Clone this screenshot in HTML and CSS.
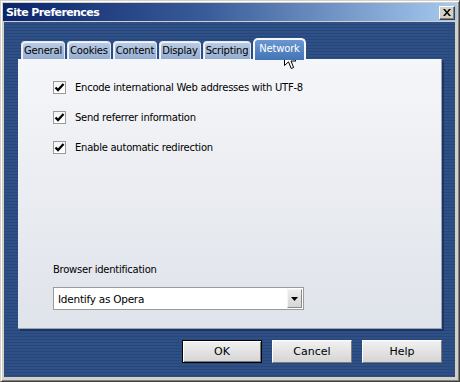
FILE: index.html
```html
<!DOCTYPE html>
<html lang="en">
<head>
    <meta charset="UTF-8">
    <title>Site Preferences</title>
    <link rel="stylesheet" href="styles.css">
</head>
<body>
    <div class="window">
        <!-- Title bar -->
        <div class="titlebar">
            <span class="title">Site Preferences</span>
            <button class="close-btn">
                <svg width="8" height="7" viewBox="0 0 8 7"><path d="M0 0h2l2 2.5L6 0h2L5 3.5 8 7H6L4 4.5 2 7H0l3-3.5z" fill="#000"/></svg>
            </button>
        </div>

        <div class="client">
            <!-- Tabs -->
            <div class="tabs">
                <div class="tab">General</div>
                <div class="tab">Cookies</div>
                <div class="tab">Content</div>
                <div class="tab">Display</div>
                <div class="tab">Scripting</div>
                <div class="tab active">Network</div>
            </div>

            <!-- Panel -->
            <div class="panel">
                <div class="options">
                    <label class="option"><span class="check"><svg width="11" height="11" viewBox="0 0 11 11"><path d="M1.5 5.5l2.5 2.6L9.5 2" fill="none" stroke="#000" stroke-width="2.2"/></svg></span>Encode international Web addresses with UTF-8</label>
                    <label class="option"><span class="check"><svg width="11" height="11" viewBox="0 0 11 11"><path d="M1.5 5.5l2.5 2.6L9.5 2" fill="none" stroke="#000" stroke-width="2.2"/></svg></span>Send referrer information</label>
                    <label class="option"><span class="check"><svg width="11" height="11" viewBox="0 0 11 11"><path d="M1.5 5.5l2.5 2.6L9.5 2" fill="none" stroke="#000" stroke-width="2.2"/></svg></span>Enable automatic redirection</label>
                </div>

                <div class="ident">
                    <div class="ident-label">Browser identification</div>
                    <div class="select">
                        <span class="select-value">Identify as Opera</span>
                        <span class="select-arrow">
                            <svg width="7" height="4" viewBox="0 0 7 4"><path d="M0 0h7L3.5 4z" fill="#000"/></svg>
                        </span>
                    </div>
                </div>
            </div>

            <!-- Buttons -->
            <div class="buttons">
                <button class="btn default">OK</button>
                <button class="btn">Cancel</button>
                <button class="btn">Help</button>
            </div>
        </div>
    </div>

    <!-- Mouse pointer -->
    <svg class="pointer" width="13" height="21" viewBox="0 0 13 21">
        <path d="M0.5 0.5V16.5L4.5 12.8L7.2 19.5L9.6 18.5L7 12H12Z" fill="#fff" stroke="#000" stroke-width="1"/>
    </svg>
</body>
</html>
```

FILE: styles.css
```css
/* Base */
body {
    margin: 0;
    width: 460px;
    height: 382px;
    font-family: 'DejaVu Sans', Verdana, sans-serif;
    font-size: 10px;
    color: #000;
    background: #d4d0c8;
    overflow: hidden;
    position: relative;
}

/* Window frame */
.window {
    box-sizing: border-box;
    width: 460px;
    height: 382px;
    border: 1px solid;
    border-color: #d4d0c8 #404040 #404040 #d4d0c8;
    box-shadow: inset 1px 1px 0 #fff, inset -1px -1px 0 #808080;
    padding: 2px;
    display: flex;
    flex-direction: column;
    background: #d4d0c8;
}

/* Title bar */
.titlebar {
    height: 18px;
    background: linear-gradient(90deg, #0a246a, #3a5c9a 45%, #a6caf0);
    display: flex;
    align-items: center;
    justify-content: space-between;
    padding: 0 2px 0 3px;
}

.title {
    color: #fff;
    font-weight: bold;
    font-size: 11px;
    letter-spacing: -0.6px;
}

.close-btn {
    width: 16px;
    height: 14px;
    padding: 0;
    margin-top: 1px;
    background: #d4d0c8;
    border: 1px solid;
    border-color: #fff #404040 #404040 #fff;
    box-shadow: inset -1px -1px 0 #808080;
    display: flex;
    align-items: center;
    justify-content: center;
}

/* Client area */
.client {
    flex: 1;
    margin: 1px 2px 2px 1px;
    padding: 16px 13px 14px 14px;
    background: repeating-linear-gradient(180deg, #2e5086 0 2px, #27477b 2px 3px);
    display: flex;
    flex-direction: column;
}

/* Tabs */
.tabs {
    display: flex;
    align-items: flex-end;
    gap: 2px;
    height: 21px;
    margin-left: 3px;
    position: relative;
    z-index: 1;
}

.tab {
    height: 18px;
    box-sizing: border-box;
    padding: 3px 2px 0;
    border: 1px solid #e2eaf5;
    border-bottom: none;
    border-radius: 4px 4px 0 0;
    background: linear-gradient(180deg, #bccde5, #94add1);
    box-shadow: inset 1px 1px 0 #f2f6fb;
    letter-spacing: -0.2px;
    white-space: nowrap;
}

.tab.active {
    height: 22px;
    margin-bottom: -1px;
    padding: 3px 4px 0;
    border: 2px solid #f4f7fc;
    border-bottom: none;
    border-radius: 5px 5px 0 0;
    background: linear-gradient(180deg, #6b97d0, #4274b6);
    box-shadow: none;
    color: #fff;
}

/* Panel */
.panel {
    height: 270px;
    background: linear-gradient(180deg, #f5f6f9, #dfe3ea);
    border-right: 1px solid #9aa4b6;
    border-bottom: 1px solid #9aa4b6;
    box-shadow: 2px 2px 0 rgba(10, 25, 60, 0.45);
    display: flex;
    flex-direction: column;
    padding: 22px 0 18px 35px;
    box-sizing: border-box;
    letter-spacing: -0.25px;
}

.options {
    display: flex;
    flex-direction: column;
    gap: 17px;
}

.option {
    display: flex;
    align-items: center;
    height: 13px;
    gap: 9px;
}

.check {
    width: 13px;
    height: 13px;
    box-sizing: border-box;
    border: 1px solid #9a9a9a;
    background: linear-gradient(180deg, #f4f4f4, #ffffff);
    display: flex;
    align-items: center;
    justify-content: center;
}

/* Browser identification */
.ident {
    margin-top: auto;
}

.ident-label {
    margin-bottom: 12px;
}

.select {
    width: 251px;
    height: 23px;
    box-sizing: border-box;
    border: 1px solid #9a9a9a;
    background: #fff;
    display: flex;
    align-items: center;
    justify-content: space-between;
    padding: 0 1px 0 4px;
    font-size: 10.5px;
}

.select-arrow {
    width: 15px;
    height: 19px;
    box-sizing: border-box;
    border: 1px solid;
    border-color: #f4f4f4 #8a8a8a #8a8a8a #f4f4f4;
    background: linear-gradient(180deg, #eeeeee, #d6d6d6);
    display: flex;
    align-items: center;
    justify-content: center;
}

/* Buttons */
.buttons {
    display: flex;
    justify-content: flex-end;
    gap: 10px;
    margin-top: 11px;
}

.btn {
    width: 80px;
    height: 23px;
    font-family: inherit;
    font-size: 11px;
    padding: 0;
    border: 1px solid;
    border-color: #fff #7a7a7a #7a7a7a #fff;
    background: linear-gradient(180deg, #f1f1f1, #d5d5d5);
    color: #000;
}

.btn.default {
    border: 1px solid #000;
    box-shadow: inset 1px 1px 0 #fff, inset -1px -1px 0 #7a7a7a;
}

/* Pointer overlay */
.pointer {
    position: absolute;
    left: 284px;
    top: 49px;
}
```
